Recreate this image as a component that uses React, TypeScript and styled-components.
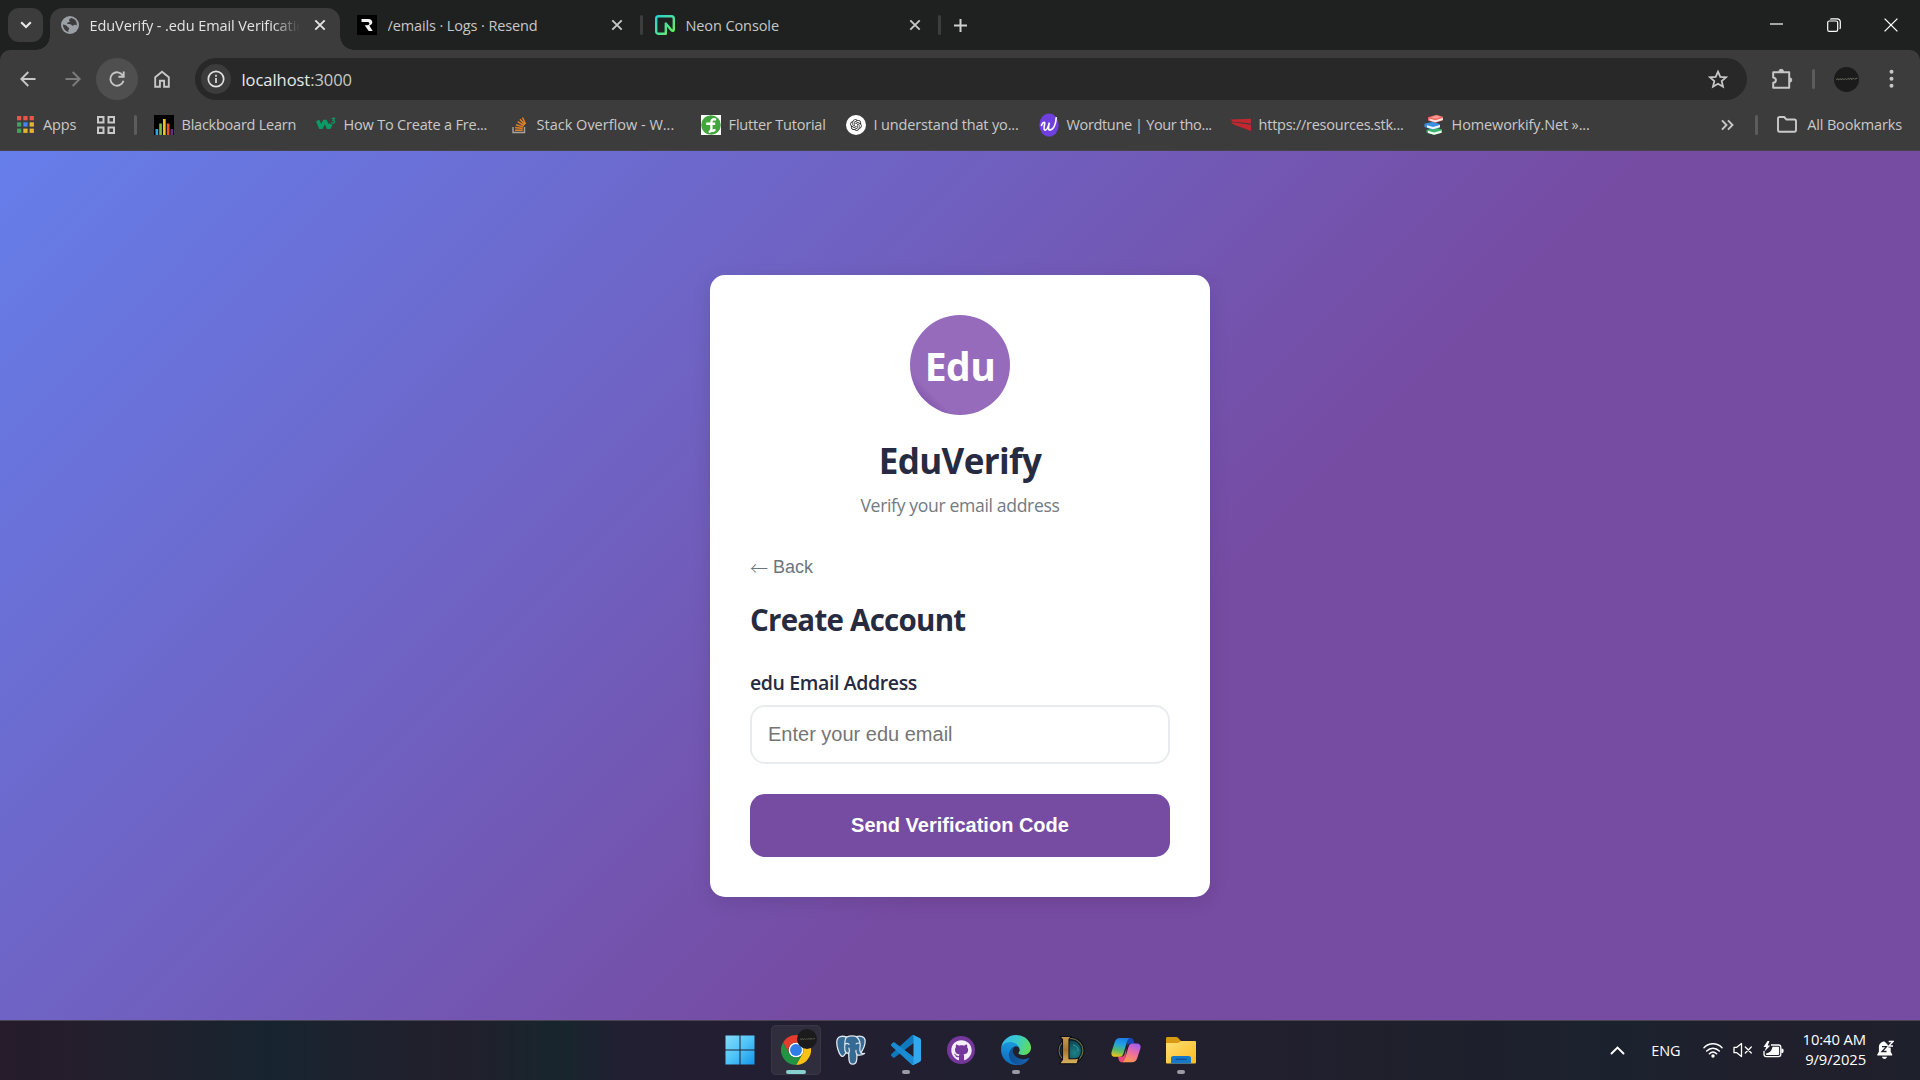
import React from 'react';
import styled, { createGlobalStyle, css } from 'styled-components';
import { FaGithub } from 'react-icons/fa';
import { RiOpenaiFill } from 'react-icons/ri';

const ui = `"Segoe UI", "Open Sans", "Noto Sans", sans-serif`;
const arial = `Arial, "Liberation Sans", sans-serif`;

const GlobalStyle = createGlobalStyle`
  *, *::before, *::after { box-sizing: border-box; }
  html, body { margin: 0; padding: 0; background: #1f2120; overflow: hidden; }
  button, input { margin: 0; }
  svg { display: block; flex: none; }
`;

const Screen = styled.div`
  display: flex;
  flex-direction: column;
  width: 1920px;
  height: 1080px;
  overflow: hidden;
  font-family: ${ui};
  color: #c9c9c9;
`;

/* ---------- tab strip ---------- */

const TabStrip = styled.header`
  display: flex;
  align-items: center;
  height: 50px;
  padding: 0 1px 0 8px;
  background: #1f2120;
`;

const TabSearch = styled.button`
  display: grid;
  place-items: center;
  width: 35px;
  height: 34px;
  margin-right: 7px;
  border: 0;
  padding: 0;
  border-radius: 11px;
  background: #3c3c3c;
  color: #e6e6e6;
`;

const Tab = styled.div<{ $active?: boolean; $width: number; $inset?: number }>`
  position: relative;
  display: flex;
  align-items: center;
  width: ${(p) => p.$width}px;
  height: 42px;
  align-self: flex-end;
  padding: 0 13px 8px 11px;
  color: ${(p) => (p.$active ? '#e3e3e3' : '#c7c7c7')};
  ${(p) =>
    p.$active
      ? css`
          background: #3c3c3c;
          border-radius: 13px 13px 0 0;
          &::before,
          &::after {
            content: '';
            position: absolute;
            bottom: 0;
            width: 14px;
            height: 14px;
          }
          &::before {
            left: -14px;
            background: radial-gradient(circle at 0 0, transparent 13.5px, #3c3c3c 14px);
          }
          &::after {
            right: -14px;
            background: radial-gradient(circle at 100% 0, transparent 13.5px, #3c3c3c 14px);
          }
        `
      : css`
          padding-left: ${p.$inset ?? 12}px;
          padding-right: 16px;
        `}
`;

const TabTitle = styled.span<{ $track: number; $fade?: boolean }>`
  flex: 1;
  margin-left: 10.5px;
  padding-top: 1px;
  overflow: hidden;
  white-space: nowrap;
  font-size: 14.5px;
  line-height: 24px;
  letter-spacing: ${(p) => p.$track}px;
  ${(p) =>
    p.$fade &&
    css`
      mask-image: linear-gradient(90deg, #000 183px, transparent 210px);
    `}
`;

const TabClose = styled.button`
  display: grid;
  place-items: center;
  width: 14px;
  height: 20px;
  border: 0;
  padding: 0;
  background: none;
  color: inherit;
`;

const Divider = styled.i<{ $color?: string }>`
  flex: none;
  width: 3px;
  height: 20px;
  border-radius: 2px;
  background: ${(p) => p.$color ?? '#5c5c5c'};
`;

const NewTab = styled.button`
  display: grid;
  place-items: center;
  width: 39px;
  height: 34px;
  border: 0;
  padding: 0;
  background: none;
  color: #d0d0d0;
`;

const WindowControls = styled.div`
  display: flex;
  margin-left: auto;
`;

const WindowButton = styled.button`
  display: grid;
  place-items: center;
  width: 57px;
  height: 50px;
  border: 0;
  padding: 0 0 1px;
  background: none;
  color: #fff;
`;

/* ---------- toolbar ---------- */

const ToolbarShell = styled.div`
  background: #1f2120;
`;

const Toolbar = styled.nav`
  display: flex;
  align-items: center;
  height: 58px;
  padding-left: 7px;
  background: #3c3c3c;
  border-radius: 10px 10px 0 0;
`;

const NavButton = styled.button<{ $hover?: boolean; $dim?: boolean; $gap?: number }>`
  display: grid;
  place-items: center;
  flex: none;
  width: 42px;
  height: 42px;
  margin-right: ${(p) => p.$gap ?? 2.5}px;
  border: 0;
  padding: 0;
  border-radius: 50%;
  background: ${(p) => (p.$hover ? '#4f4f4f' : 'none')};
  color: ${(p) => (p.$dim ? '#7c7c7c' : '#c7c7c7')};
`;

const Omnibox = styled.div`
  display: flex;
  align-items: center;
  flex: none;
  width: 1552px;
  height: 42px;
  padding: 0 19.5px 0 6px;
  border-radius: 21px;
  background: #282828;
  color: #c7c7c7;
`;

const SiteInfo = styled.span`
  display: grid;
  place-items: center;
  width: 30px;
  height: 30px;
  margin-right: 10.5px;
  border-radius: 50%;
  background: #3c3c3c;
  color: #e0e0e0;
`;

const Url = styled.span`
  flex: 1;
  padding-top: 1px;
  font-size: 16.5px;
  line-height: 26px;
  color: #c9c9c9;
  letter-spacing: -0.05px;
  b {
    font-weight: 400;
    color: #e8e8e8;
  }
`;

const ToolbarActions = styled.div`
  display: grid;
  grid-template-columns: 22px 3px 25px 5px;
  column-gap: 19px;
  align-items: center;
  padding-left: 24px;
  color: #c7c7c7;
`;

const Avatar = styled.span<{ $size: number }>`
  display: grid;
  place-items: center;
  width: ${(p) => p.$size}px;
  height: ${(p) => p.$size}px;
  border-radius: 50%;
  background: #1b1b1b;
`;

const MenuButton = styled.span`
  display: block;
  margin-left: 11px;
`;

/* ---------- bookmarks ---------- */

const BookmarkBar = styled.nav`
  display: flex;
  align-items: center;
  height: 43px;
  padding: 0 18px 9px 17px;
  background: #3c3c3c;
  border-bottom: 1px solid #45434c;
`;

const Bookmark = styled.a<{ $width?: number; $gap?: number; $track?: number }>`
  display: flex;
  align-items: center;
  flex: none;
  width: ${(p) => (p.$width ? `${p.$width}px` : 'auto')};
  gap: ${(p) => p.$gap ?? 7.6}px;
  font-size: 14.5px;
  line-height: 24px;
  white-space: nowrap;
  letter-spacing: ${(p) => p.$track ?? 0}px;
  color: #c9c9c9;
`;

const BookmarkEnd = styled.div`
  display: flex;
  align-items: center;
  margin-left: auto;
`;

/* ---------- page ---------- */

const Page = styled.main`
  display: flex;
  justify-content: center;
  align-items: center;
  height: 869px;
  background: linear-gradient(135deg, #667eea 0%, #764ba2 60%);
`;

const Card = styled.section`
  display: flex;
  flex-direction: column;
  width: 500px;
  padding: 40px;
  border-radius: 15px;
  background: #fff;
  box-shadow: 0 5px 19px rgba(0, 0, 0, 0.1);
  color: #272b41;
`;

const Logo = styled.div`
  display: grid;
  place-items: center;
  align-self: center;
  width: 100px;
  height: 100px;
  padding-top: 2px;
  border-radius: 50%;
  background: linear-gradient(45deg, #8458ad 14%, #966bbb 22%);
  color: #fff;
  font-size: 39px;
  font-weight: 700;
  letter-spacing: -0.5px;
`;

const Brand = styled.h1`
  margin: 24px 0 0;
  text-align: center;
  font-size: 35px;
  font-weight: 700;
  line-height: 44px;
  letter-spacing: -0.65px;
`;

const Tagline = styled.p`
  margin: 9px 0 0;
  text-align: center;
  font-size: 17.6px;
  line-height: 26px;
  letter-spacing: -0.35px;
  color: #727a82;
`;

const Back = styled.button`
  display: flex;
  align-items: center;
  gap: 5px;
  align-self: flex-start;
  height: 22px;
  margin-top: 38px;
  padding: 0;
  border: 0;
  background: none;
  font-family: ${arial};
  font-size: 18px;
  line-height: 22px;
  color: #6c757d;
`;

const BackArrow = styled.span`
  font-family: "Noto Sans CJK JP", sans-serif;
  font-weight: 300;
`;

const Heading = styled.h2`
  margin: 22px 0 30px;
  font-size: 29.5px;
  font-weight: 700;
  line-height: 40px;
  letter-spacing: -0.75px;
`;

const Label = styled.label`
  font-size: 19.5px;
  font-weight: 600;
  line-height: 26px;
  letter-spacing: -0.38px;
`;

const EmailInput = styled.input`
  width: 100%;
  height: 59px;
  margin: 9px 0 30px;
  padding: 0 16px;
  border: 2px solid #e9ecef;
  border-radius: 15px;
  background: #fff;
  font-family: ${arial};
  font-size: 20px;
  &::placeholder {
    color: #757575;
    opacity: 1;
  }
`;

const Submit = styled.button`
  width: 100%;
  height: 63px;
  border: 0;
  border-radius: 15px;
  background: #764ba2;
  color: #fff;
  font-family: ${arial};
  font-size: 20px;
  font-weight: 700;
`;

/* ---------- taskbar ---------- */

const Taskbar = styled.footer`
  display: grid;
  grid-template-columns: 1fr auto 1fr;
  height: 60px;
  border-top: 1px solid #494555;
  background: linear-gradient(
    90deg,
    #261c2b 0,
    #251d2c 60px,
    #20212d 150px,
    #17242f 270px,
    #1d222e 360px,
    #211f2c 450px,
    #1d222d 505px,
    #17262c 560px,
    #221f33 625px,
    #231e32 700px,
    #21202f 1000px,
    #221f2e 1250px,
    #1e202c 1450px,
    #1b222e 1620px,
    #211f2c 1780px,
    #1e202c 1920px
  );
`;

const Apps = styled.div`
  grid-column: 2;
  display: flex;
  gap: 5px;
  padding: 4px 0 0 2px;
`;

const AppTile = styled.div<{ $focused?: boolean }>`
  display: flex;
  flex-direction: column;
  align-items: center;
  width: 50px;
  height: 50px;
  padding-top: 10px;
  border-radius: 5px;
  &:first-child {
    padding-right: 3px;
  }
  ${(p) =>
    p.$focused &&
    css`
      background: #302d3d;
      box-shadow: inset 0 0 0 1px #393645;
    `}
`;

const AppIcon = styled.div`
  position: relative;
  display: grid;
  place-items: center;
  width: 30px;
  height: 30px;
`;

const ProfileBadge = styled.div`
  position: absolute;
  left: 16px;
  top: -6px;
`;

const Running = styled.i<{ $wide?: boolean }>`
  width: ${(p) => (p.$wide ? 20 : 8)}px;
  height: 4px;
  margin-top: 5px;
  border-radius: 2px;
  background: ${(p) => (p.$wide ? '#86d0cd' : '#9b99a3')};
`;

const Github = styled.span`
  display: grid;
  place-items: center;
  width: 28px;
  height: 28px;
  border-radius: 50%;
  background: #75379b;
  color: #f5eef9;
`;

const Tray = styled.div`
  grid-column: 3;
  display: flex;
  align-items: center;
  justify-content: flex-end;
  padding: 0 26px 1px 0;
  color: #fff;
`;

const Language = styled.span`
  margin: 0 22px 0 26px;
  font-size: 14.5px;
  letter-spacing: -0.1px;
`;

const Quick = styled.div`
  display: flex;
  align-items: center;
  gap: 10px;
`;

const Clock = styled.div`
  margin: 0 11px 0 19px;
  padding-bottom: 3px;
  text-align: right;
  font-size: 14.8px;
  line-height: 20px;
  letter-spacing: -0.1px;
`;

/* ---------- glyphs ---------- */

const Cross = () => (
  <svg width="12" height="12" viewBox="0 0 12 12" stroke="currentColor" strokeWidth="1.9">
    <path d="M1.3 1.3l9.4 9.4M10.7 1.3l-9.4 9.4" />
  </svg>
);

const Globe = () => (
  <svg width="18" height="18" viewBox="0 0 18 18">
    <circle cx="9" cy="9" r="9" fill="#9aa0a6" />
    <path
      d="M9.8 2.1c-.3 1-1.6.8-1.8 1.7-.1.9 1 .9.7 1.8-.4 1-2 .6-2.5 1.4-.3.7.2 1 1.3 1.1 1.3.2 2.3 0 3.1 1 .6.8 1.7.6 2.3.1.7-.6 2.5-.3 3 .2C16 4.9 13.3 2.4 9.8 2.1zM2 8.6c1.9.1 3.7 1 4.4 2.1.5.9 1.7.8 1.8 1.8.1.9-.9 1.2-.9 2.1 0 .6.3 1 .2 1.3C4.3 15.3 1.9 12.3 2 8.6z"
      fill="#3c3c3c"
    />
  </svg>
);

const ResendIcon = () => (
  <svg width="20" height="20" viewBox="0 0 20 20">
    <path fill="#000" d="M0 0h20v20H0z" />
    <path
      fill="#f2f2f2"
      d="M4.5 4h7c2.3 0 3.8 1.4 3.8 3.3 0 1.7-1.2 2.7-3 3.2l3.4 5.5h-4L7.7 10.3h2.5c1.3 0 2.2-.7 2.2-1.7 0-1-.8-1.6-2.1-1.6H4.5z"
    />
  </svg>
);

const NeonIcon = () => (
  <svg width="20" height="20" viewBox="0 0 20 20" fill="none">
    <defs>
      <linearGradient id="neon" x1="0" y1="0" x2="1" y2="1">
        <stop offset="0" stopColor="#28d3d0" />
        <stop offset="0.55" stopColor="#4fe09a" />
        <stop offset="1" stopColor="#6cf24e" />
      </linearGradient>
    </defs>
    <path
      stroke="url(#neon)"
      strokeWidth="2.4"
      strokeLinejoin="round"
      d="M10.8 18.8H3.6A2.4 2.4 0 0 1 1.2 16.4V3.6A2.4 2.4 0 0 1 3.6 1.2h12.8a2.4 2.4 0 0 1 2.4 2.4v10.8c0 1.6-1.4 1.9-2.3.8L10.8 8.4z"
    />
  </svg>
);

const Minimize = () => (
  <svg width="13" height="13" viewBox="0 0 13 13">
    <path d="M0 6h13" stroke="currentColor" strokeWidth="1.2" />
  </svg>
);

const Restore = () => (
  <svg width="14" height="14" viewBox="0 0 14 14" fill="none" stroke="currentColor" strokeWidth="1.2">
    <rect x=".7" y="3" width="10" height="10.3" rx="1.6" />
    <path d="M3.2 1.3C3.6.9 4 .8 4.6.8H10c2 0 3.3 1.2 3.3 3.2v5.4c0 .6-.2 1.1-.6 1.5" />
  </svg>
);

const CloseWindow = () => (
  <svg width="14" height="14" viewBox="0 0 14 14" stroke="currentColor" strokeWidth="1.3">
    <path d="M.6.6l12.8 12.8M13.4.6L.6 13.4" />
  </svg>
);

const Arrow = ({ flip }: { flip?: boolean }) => (
  <svg width="16" height="16" viewBox="0 0 16 16" fill="none" stroke="currentColor" strokeWidth="1.9">
    <path d={flip ? 'M.5 8h14M7.7 1l7 7-7 7' : 'M15.5 8h-14M8.3 1l-7 7 7 7'} />
  </svg>
);

const Reload = () => (
  <svg width="18" height="18" viewBox="0 0 18 18" fill="none" stroke="currentColor" strokeWidth="1.9">
    <path d="M14.9 5.7A6.7 6.7 0 1 0 15.5 10.8" />
    <path d="M15.7 1.5v5.3h-5.3" />
  </svg>
);

const Home = () => (
  <svg width="18" height="18" viewBox="0 0 18 18" fill="none" stroke="currentColor" strokeWidth="1.9">
    <path d="M2.2 7.2L9 1.8l6.8 5.4v9.6h-4.7v-6H6.9v6H2.2z" />
  </svg>
);

const Info = () => (
  <svg width="18" height="18" viewBox="0 0 18 18" fill="none" stroke="currentColor" strokeWidth="1.7">
    <circle cx="9" cy="9" r="7.7" />
    <path d="M9 8v5M9 4.8v1.9" />
  </svg>
);

const Star = () => (
  <svg width="20" height="20" viewBox="0 0 20 20" fill="none" stroke="currentColor" strokeWidth="1.8">
    <path d="M10 2.6l2.3 5.2 5.7.5-4.3 3.8 1.3 5.6-5-3-5 3 1.3-5.6L2 8.3l5.7-.5z" />
  </svg>
);

const Puzzle = () => (
  <svg width="22" height="22" viewBox="0 0 22 22" fill="none" stroke="currentColor" strokeWidth="2">
    <path d="M2.200 4.200h16v15.500h-16v-4.900c1.900-.3 2.700-1.300 2.700-2.600S4.100 9.900 2.200 9.600z" strokeLinejoin="round" />
    <path d="M7.900 3.600a2.300 2.300 0 0 1 4.600 0zM18.600 9.800a2.200 2.200 0 0 1 0 4.400z" fill="currentColor" strokeWidth="1" />
  </svg>
);

const Dots = () => (
  <svg width="5" height="20" viewBox="0 0 5 20" fill="currentColor">
    <circle cx="2.5" cy="2.700" r="2" />
    <circle cx="2.5" cy="9.700" r="2" />
    <circle cx="2.5" cy="16.700" r="2" />
  </svg>
);

const Signature = ({ width }: { width: number }) => (
  <svg width={width} height="4" viewBox="0 0 24 4" fill="none" stroke="#77776a" strokeWidth=".8">
    <path d="M1 2.6l2-1 .5 1.3 2-1.3.5 1.2 2-1.2 1 1.2 1.5-1.3 1 1 2-1.2.5 1.2 2-1.5.5 1.6 2-1.4 1 1 3-1.2" />
  </svg>
);

const AppsGrid = () => {
  const colors = ['#ea5548', '#ea5548', '#ea5548', '#3fa45b', '#4285f4', '#e5b32e', '#3fa45b', '#e5b32e', '#e5b32e'];
  return (
    <svg width="17" height="17" viewBox="0 0 17 17">
      {colors.map((c, i) => (
        <rect key={i} x={(i % 3) * 6.3} y={Math.floor(i / 3) * 6.3} width="4.3" height="4.3" fill={c} />
      ))}
    </svg>
  );
};

const TabGroups = () => (
  <svg width="18" height="18" viewBox="0 0 18 18" fill="none" stroke="currentColor" strokeWidth="2">
    <path d="M1 1h5.500v5.500H1zM11.500 1H17v5.500h-5.500zM1 11.500h5.500V17H1zM11.500 11.500H17V17h-5.500z" />
  </svg>
);

const BlackboardIcon = () => (
  <svg width="20" height="20" viewBox="0 0 20 20">
    <path fill="#000" d="M0 0h20v20H0z" />
    <path fill="#2aa7dc" d="M1.500 14h2.700v6H1.500z" />
    <path fill="#73b843" d="M5.200 8.500h2.700V20H5.200z" />
    <path fill="#f0c020" d="M9 4h2.700v16H9z" />
    <path fill="#e4572e" d="M12.800 8.500h2.700V20h-2.700z" />
    <path fill="#6b2c86" d="M16.500 14h2.700v6h-2.700z" />
  </svg>
);

const W3Icon = () => (
  <svg width="20" height="20" viewBox="0 0 20 20" fill="none" stroke="#0b9b66">
    <path d="M1.700 5.500l3.200 7.700 4-7.700 3.800 7.700 2.300-4" strokeWidth="3.600" strokeLinejoin="bevel" />
    <path d="M15.800 3.300h2.700l-1.500 2c2.300 0 2.100 3-.2 2.800-.6 0-1-.3-1.300-.7" strokeWidth="1.200" />
  </svg>
);

const StackIcon = () => (
  <svg width="20" height="20" viewBox="0 0 20 20" fill="none">
    <path d="M4 12v5.500h11.500V12" stroke="#a8a39e" strokeWidth="1.400" />
    <path
      d="M6 15.200h7.700M6.100 12.600l7.600.9M7 9.700l7.200 2.200M8.700 6.700l6.300 3.900M11 4.200l4.800 5.500M13.500 2.500l3 6.500"
      stroke="#e08228"
      strokeWidth="1.500"
    />
  </svg>
);

const FlutterTutorialIcon = () => (
  <svg width="20" height="20" viewBox="0 0 20 20" fill="none">
    <path fill="#fff" d="M0 0h20v20H0z" />
    <circle cx="10" cy="10" r="9.800" fill="#43a53d" />
    <path d="M15 4.800c-2.600-1.300-4.600-.3-4.600 2.500v6.500c0 1.700-.8 3-2.700 3.200M5.200 8.700h9M10.500 15c.8 1.300 2.600 1 3.500-.7" stroke="#fff" strokeWidth="2.400" />
  </svg>
);

const ChatIcon = () => (
  <svg width="20" height="20" viewBox="0 0 20 20">
    <circle cx="10" cy="10" r="10" fill="#fff" />
    <g color="#222">
      <RiOpenaiFill x="3" y="3" size={14} />
    </g>
  </svg>
);

const WordtuneIcon = () => (
  <svg width="20" height="24" viewBox="0 0 20 24" fill="none">
    <ellipse cx="10" cy="12" rx="9.700" ry="11.500" fill="#6f3fe0" />
    <path
      d="M2.500 12.500c.7-2.500 2.800-4.200 3.200-2.700.4 1.600-2 6.700.2 7.300 2.300.5 4-5 4.400-7.400-.8 3.400-1.500 7.300.7 7.300 3.700 0 6-6.500 6.200-12.200"
      stroke="#fff"
      strokeWidth="1.600"
      strokeLinecap="round"
    />
  </svg>
);

const StakeIcon = () => (
  <svg width="20" height="14" viewBox="0 0 20 14">
    <path fill="#c3272f" d="M0 1.500L20 .8v4.700L1 3.500zM0 4l20 2.800v6.200L2.500 6.500z" />
  </svg>
);

const BooksIcon = () => (
  <svg width="20" height="22" viewBox="0 0 20 22">
    <path fill="#39b567" d="M2.500 16l9-2.500 6.500 2v3.200L10 21l-7.500-2.500z" />
    <path fill="#f3f8f4" d="M4 16.800l6 1.700 7.500-2v2.200l-7.500 2-6-1.600z" />
    <path fill="#3a8fe0" d="M.5 9.700l8.500-2 7 2.500v3.100l-7.500 2.400-8-2.700z" />
    <path fill="#eef5fc" d="M3 11.200l6 1.700 7-2v2.300L9 15.200l-6-1.800z" />
    <path fill="#ef6a62" d="M4 3.200L12.500.8l6.500 2v3.400l-7.500 2.500L4 6.500z" />
    <path fill="#fbe9e6" d="M5.500 4.700l6 1.600 7.300-2.200v1.900l-7.300 2.200-6-1.700z" />
    <path fill="#f59a94" d="M6.500 3.200l6-1.600 4.500 1.400-5.500 1.700z" />
  </svg>
);

const Chevrons = () => (
  <svg width="13" height="12" viewBox="0 0 13 12" fill="none" stroke="currentColor" strokeWidth="1.900">
    <path d="M1 1.300L5.500 6 1 10.700M7 1.300L11.500 6 7 10.700" />
  </svg>
);

const Folder = () => (
  <svg width="20" height="17" viewBox="0 0 20 17" fill="none" stroke="currentColor" strokeWidth="1.900">
    <path d="M1 2.600C1 1.500 1.500 1 2.600 1h4.600l2.200 2.500h8c1.100 0 1.600.5 1.600 1.600v9c0 1.100-.5 1.600-1.600 1.600H2.600C1.500 15.700 1 15.200 1 14.100z" />
  </svg>
);

const WindowsIcon = () => (
  <svg width="30" height="30" viewBox="0 0 30 30">
    <defs>
      <linearGradient id="win" gradientUnits="userSpaceOnUse" x1="0" y1="0" x2="30" y2="30">
        <stop offset="0" stopColor="#86dcfb" />
        <stop offset="0.5" stopColor="#4fc4f7" />
        <stop offset="1" stopColor="#1292ea" />
      </linearGradient>
    </defs>
    <path fill="url(#win)" d="M.5.5h14v14H.5zM15.500.5h14v14h-14zM.5 15.500h14v14H.5zM15.500 15.500h14v14h-14z" />
  </svg>
);

const ChromeIcon = () => (
  <svg width="30" height="30" viewBox="0 0 48 48">
    <circle cx="24" cy="24" r="12" fill="#fff" />
    <path fill="#e33b2e" d="M24,12H44.7812a23.9939,23.9939,0,0,0-41.5639.0029L13.6079,30l.0093-.0024A11.9852,11.9852,0,0,1,24,12Z" />
    <path fill="#fbc116" d="M34.3913,30.0029,24.0007,48A23.994,23.994,0,0,0,44.78,12.0031H23.9989l-.0025.0093A11.985,11.985,0,0,1,34.3913,30.0029Z" />
    <path fill="#229342" d="M13.6086,30.0031,3.218,12.006A23.994,23.994,0,0,0,24.0025,48L34.3931,30.0029l-.0067-.0068a11.9852,11.9852,0,0,1-20.7778.007Z" />
    <circle cx="24" cy="24" r="9.500" fill="#2f7de9" />
  </svg>
);

const PostgresIcon = () => (
  <svg width="30" height="30" viewBox="0 0 30 30" strokeLinejoin="round" strokeLinecap="round">
    <path
      d="M10.500 2.200C6.500.4 1.200 1 .8 6.500c-.3 4.300 1.700 11.600 4.300 14.200 1.200 1.200 2.300.6 3-.4l2-2.600c.8.500 1.700.6 2.600.5.200 3-.2 6.600 1 9.200.9 2 4.200 2.400 5.800.6 1.600-1.900 1.300-5.300 1.500-8.200 2.600.7 5.500.3 7.500-1.300-1.400.1-2.900.1-3.700-.7 2.500-3.600 4.500-9.300 4.300-12.300C28.800 1.500 24.300.4 20.500 1.700 17.500.5 13.500.7 10.500 2.200z"
      fill="#356a94"
      stroke="#dfe8ef"
      strokeWidth="1.300"
    />
    <path
      d="M10.500 2.200C8.200 5 9 9.500 8.700 12.500c-.2 2 .2 3.700 1.400 5.200M20.500 1.700c2.500 2.200 3.700 5.500 3.700 8.300 0 2.800-1.200 4.500.2 7.300M12.700 18.200c.8-1.700 1.100-3 .2-5.200M9 9.200c1.300-1 3-.9 4 .1M20.200 8.800c1-.8 2.500-1 3.600-.3M21 19.800c-.6-1.500-1.500-2.500-1-4.500"
      fill="none"
      stroke="#dfe8ef"
      strokeWidth="1.200"
    />
  </svg>
);

const VsCodeIcon = () => (
  <svg width="30" height="30" viewBox="0 0 100 100">
    <path
      fill="#0f79bd"
      d="M96.4614 10.7962L75.8569 0.875542C73.4719 -0.272773 70.6217 0.211611 68.75 2.08333L1.29858 63.5832C-0.515693 65.2373 -0.513607 68.0937 1.30308 69.7452L6.81272 74.754C8.29793 76.1042 10.5347 76.2036 12.1338 74.9905L93.3609 13.3699C96.086 11.3026 100 13.2462 100 16.6667V16.4275C100 14.0265 98.6246 11.8378 96.4614 10.7962Z"
    />
    <path
      fill="#1a8ad3"
      d="M96.4614 89.2038L75.8569 99.1245C73.4719 100.273 70.6217 99.7884 68.75 97.9167L1.29858 36.4169C-0.515693 34.7627 -0.513607 31.9063 1.30308 30.2548L6.81272 25.246C8.29793 23.8958 10.5347 23.7964 12.1338 25.0095L93.3609 86.6301C96.086 88.6974 100 86.7538 100 83.3333V83.5725C100 85.9735 98.6246 88.1622 96.4614 89.2038Z"
    />
    <path
      fill="#32a9ee"
      d="M75.8578 99.1263C73.4721 100.274 70.6219 99.7885 68.75 97.9166C71.0564 100.223 75 98.5895 75 95.3278V4.67213C75 1.41039 71.0564 -0.223106 68.75 2.08329C70.6219 0.211402 73.4721 -0.273666 75.8578 0.873633L96.4587 10.7807C98.6234 11.8217 100 14.0112 100 16.4132V83.5871C100 85.9891 98.6234 88.1786 96.4586 89.2196L75.8578 99.1263Z"
    />
  </svg>
);

const EdgeIcon = () => (
  <svg width="30" height="30" viewBox="0 0 256 256">
    <defs>
      <linearGradient id="edgeDeep" x1="0" y1="0" x2="1" y2="0">
        <stop offset="0" stopColor="#0c4f94" />
        <stop offset="1" stopColor="#1a64ae" />
      </linearGradient>
      <linearGradient id="edgeBlue" x1="0.6" y1="0" x2="0.4" y2="1">
        <stop offset="0" stopColor="#1b9de2" />
        <stop offset="0.5" stopColor="#1683cf" />
        <stop offset="1" stopColor="#0f6bbd" />
      </linearGradient>
      <linearGradient id="edgeWave" x1="0" y1="0.3" x2="1" y2="0.6">
        <stop offset="0" stopColor="#35b8ee" />
        <stop offset="0.5" stopColor="#3bcbc9" />
        <stop offset="1" stopColor="#62dd55" />
      </linearGradient>
    </defs>
    <path
      fill="url(#edgeDeep)"
      d="M235.68 195.46a93.73 93.73 0 0 1-10.54 4.71 101.87 101.87 0 0 1-35.9 6.46c-47.32 0-88.54-32.55-88.54-74.32A31.48 31.48 0 0 1 117.13 105c-42.8 1.8-53.8 46.4-53.8 72.53 0 73.88 68.09 81.37 82.76 81.37 7.91 0 19.84-2.3 27-4.56l1.31-.44a128.34 128.34 0 0 0 66.6-52.8 4 4 0 0 0-5.32-5.64z"
    />
    <path
      fill="url(#edgeBlue)"
      d="M105.73 241.42a79.2 79.2 0 0 1-22.74-21.34 80.72 80.72 0 0 1 29.53-120c3.12-1.47 8.45-4.13 15.54-4a32.35 32.35 0 0 1 25.69 13 31.88 31.88 0 0 1 6.36 18.66c0-.21 24.46-79.6-80-79.6-43.9 0-80 41.66-80 78.21a130.15 130.15 0 0 0 12.11 56 128 128 0 0 0 156.38 67.11 75.55 75.55 0 0 1-62.78-8z"
    />
    <path
      fill="url(#edgeWave)"
      d="M152.33 148.86c-.81 1.05-3.3 2.5-3.3 5.66 0 2.61 1.7 5.12 4.72 7.23 14.38 10 41.49 8.68 41.56 8.68a59.56 59.56 0 0 0 30.27-8.35A61.38 61.38 0 0 0 256 109.21c.26-22.41-8-37.31-11.34-43.91C223.46 23.84 177.72 0 128 0A128 128 0 0 0 0 126.2c.48-36.54 36.8-66.05 80-66.05 3.5 0 23.46.34 42 10.07 16.34 8.58 24.9 18.94 30.85 29.21 6.18 10.67 7.28 24.15 7.28 29.52s-2.74 13.33-7.8 19.91z"
    />
  </svg>
);

const LeagueIcon = () => (
  <svg width="30" height="30" viewBox="0 0 30 30">
    <defs>
      <linearGradient id="lolGold" x1="0" y1="0" x2="0" y2="1">
        <stop offset="0" stopColor="#c99a4e" />
        <stop offset="0.5" stopColor="#a87630" />
        <stop offset="1" stopColor="#d8b25e" />
      </linearGradient>
      <radialGradient id="lolSea" cx="0.65" cy="0.6" r="0.6">
        <stop offset="0" stopColor="#1b8288" />
        <stop offset="1" stopColor="#0a3a49" />
      </radialGradient>
    </defs>
    <circle cx="15" cy="15.500" r="13.500" fill="#06141b" />
    <circle cx="15" cy="15.500" r="12" fill="url(#lolSea)" stroke="#8a6a36" strokeWidth="1" />
    <circle cx="15" cy="15.500" r="10.600" fill="none" stroke="#06141b" strokeWidth="1" />
    <path d="M17 10c3.500.5 5.500 3 5.200 6.500" fill="none" stroke="#2fa5a5" strokeWidth="1" />
    <path
      d="M4 1.500h11l-2 3v19.300h6.700l3.300-1-2 5.900H3.500l3-4.200V4.500z"
      fill="url(#lolGold)"
      stroke="#0c0f16"
      strokeWidth="1.100"
    />
  </svg>
);

const CopilotIcon = () => (
  <svg width="30" height="30" viewBox="0 0 30 30">
    <defs>
      <linearGradient id="copLeft" x1="0.5" y1="0" x2="0.3" y2="1">
        <stop offset="0" stopColor="#1c7fe8" />
        <stop offset="0.35" stopColor="#21a5dc" />
        <stop offset="0.65" stopColor="#55b96a" />
        <stop offset="1" stopColor="#f3c31f" />
      </linearGradient>
      <linearGradient id="copRight" x1="0.7" y1="0" x2="0.3" y2="1">
        <stop offset="0" stopColor="#a55df0" />
        <stop offset="0.5" stopColor="#ee6f9c" />
        <stop offset="1" stopColor="#fb9a4c" />
      </linearGradient>
    </defs>
    <path d="M15.500 3h4c1.800 0 2.600 1 3.100 2.700l.9 3h-4.200c-1.700 0-2.400.9-2.900 2.500z" fill="#1746b8" />
    <path d="M14 27.300h-3c-1.900 0-2.900-1.200-3.300-2.900l-.7-2.900h3.600c1.700 0 2.400-.8 2.900-2.300l2-6z" fill="#e8457a" />
    <path
      d="M9 3h9.500c-1.500.7-2 2-2.500 3.700l-3.500 11.500c-.7 2.400-1.700 3.600-4 3.600H4.200c-3.200 0-4.400-2-3.500-5.300L3.800 7C4.700 4.300 6.300 3 9 3z"
      fill="url(#copLeft)"
    />
    <path
      d="M21 27.300h-9.500c1.500-.7 2-2 2.500-3.700l3.500-11.500c.7-2.400 1.700-3.600 4-3.600h4.300c3.200 0 4.400 2 3.500 5.300l-3.100 9.500c-.9 2.700-2.500 4-5.200 4z"
      fill="url(#copRight)"
    />
  </svg>
);

const ExplorerIcon = () => (
  <svg width="30" height="30" viewBox="0 0 30 30">
    <defs>
      <linearGradient id="folderFace" x1="0" y1="0" x2="1" y2="1">
        <stop offset="0" stopColor="#ffdf73" />
        <stop offset="1" stopColor="#fcbb1f" />
      </linearGradient>
    </defs>
    <path d="M0 3.500C0 2.500.6 2 1.500 2h8.700c.8 0 1.300.3 1.800.8L14.500 5.500V12H0z" fill="#d99a13" />
    <path d="M0 8h11.500c1 0 1.500-.3 2.100-.9L14.700 6h14c.9 0 1.300.5 1.300 1.300v20c0 .9-.5 1.200-1.300 1.200H1.300C.5 28.500 0 28.200 0 27.300z" fill="url(#folderFace)" />
    <path d="M5 28.500v-5C5 21.700 5.900 21 7.500 21h15c1.600 0 2.500.7 2.500 2.500v5z" fill="#1777c9" />
    <path d="M9.500 24.300h11" stroke="#0b4f91" strokeWidth="1.200" />
  </svg>
);

const ChevronUp = () => (
  <svg width="15" height="9" viewBox="0 0 15 9" fill="none" stroke="currentColor" strokeWidth="1.900" strokeLinecap="round">
    <path d="M1.500 7.500l6-6 6 6" />
  </svg>
);

const Wifi = () => (
  <svg width="20" height="16" viewBox="0 0 20 16" fill="none" stroke="currentColor" strokeWidth="1.500" strokeLinecap="round">
    <path d="M1 5.800c5-5.300 13-5.300 18 0M3.700 8.900c3.600-3.700 9-3.700 12.600 0M6.400 11.800c2.200-2.200 5-2.200 7.200 0" />
    <circle cx="10" cy="14" r="1.700" fill="currentColor" stroke="none" />
  </svg>
);

const Muted = () => (
  <svg width="20" height="16" viewBox="0 0 20 16" fill="none" stroke="currentColor" strokeWidth="1.300" strokeLinejoin="round" strokeLinecap="round">
    <path d="M1 5.300h2.800L8.500 1.500v13L3.800 10.700H1z" />
    <path d="M12.300 5l6 6M18.300 5l-6 6" />
  </svg>
);

const Battery = () => (
  <svg width="21" height="18" viewBox="0 0 21 18" fill="none">
    <path d="M8 4h7.500c1.500 0 2.300.8 2.300 2.300v7c0 1.500-.8 2.300-2.300 2.300H3.300C1.800 15.600 1 14.800 1 13.300V10" stroke="currentColor" strokeWidth="1.300" />
    <path d="M9.500 5.800h5.800c.5 0 .8.3.8.8v6.500c0 .5-.3.8-.8.8H3.700c-.5 0-.8-.3-.8-.8v-.6c3.600-.2 6-3 6.600-6.700z" fill="currentColor" />
    <path d="M18.300 7.500c2 0 2.300.8 2.300 2.200s-.3 2.300-2.300 2.300z" fill="currentColor" />
    <path d="M4.500 0L.5 6h2.700L1.500 10.500 7.300 4.500H4.700L6.500 0z" fill="currentColor" />
  </svg>
);

const Bell = () => (
  <svg width="17" height="20" viewBox="0 0 17 20">
    <path
      d="M7.500 1.500C4.200 1.500 1.900 4 1.900 7v4.700L.3 14.500c-.2.6 0 1 .6 1h13.700c.6 0 .8-.4.6-1l-1.500-2.800V7.500zM5 16.800h5c-.3 1.400-1.200 2.100-2.500 2.100S5.300 18.200 5 16.800z"
      fill="currentColor"
    />
    <path d="M9.500.5H17v7h-5.500z" fill="#211f2c" />
    <path d="M5 6.700h4.500L5 11.500h4.500" fill="none" stroke="#211f2c" strokeWidth="1.300" />
    <path d="M11.700 1.500H16L11.700 6H16" fill="none" stroke="currentColor" strokeWidth="1.300" />
  </svg>
);

/* ---------- data ---------- */

const bookmarks = [
  { icon: <BlackboardIcon />, text: 'Blackboard Learn', width: 162, track: -0.25 },
  { icon: <W3Icon />, text: 'How To Create a Fre...', width: 193, track: -0.2 },
  { icon: <StackIcon />, text: 'Stack Overflow - W...', width: 192, track: 0 },
  { icon: <FlutterTutorialIcon />, text: 'Flutter Tutorial', width: 145, track: -0.2 },
  { icon: <ChatIcon />, text: 'I understand that yo...', width: 193, track: -0.16 },
  { icon: <WordtuneIcon />, text: 'Wordtune | Your tho...', width: 192, track: -0.36 },
  { icon: <StakeIcon />, text: 'https://resources.stk...', width: 193, track: -0.25 },
  { icon: <BooksIcon />, text: 'Homeworkify.Net »...', width: 180, track: -0.13 },
];

const taskbarApps = [
  { name: 'start', icon: <WindowsIcon /> },
  { name: 'chrome', icon: <ChromeIcon />, focused: true, running: true },
  { name: 'postgres', icon: <PostgresIcon /> },
  { name: 'code', icon: <VsCodeIcon />, running: true },
  { name: 'github', icon: <Github><FaGithub size={21} /></Github> },
  { name: 'edge', icon: <EdgeIcon />, running: true },
  { name: 'league', icon: <LeagueIcon /> },
  { name: 'copilot', icon: <CopilotIcon /> },
  { name: 'explorer', icon: <ExplorerIcon />, running: true },
];

export default function App() {
  return (
    <Screen>
      <GlobalStyle />
      <TabStrip>
        <TabSearch>
          <svg width="12" height="8" viewBox="0 0 12 8" fill="none" stroke="currentColor" strokeWidth="2.2">
            <path d="M1.2 1.2L6 6l4.800-4.800" />
          </svg>
        </TabSearch>
        <Tab $active $width={290}>
          <Globe />
          <TabTitle $track={-0.08} $fade>EduVerify - .edu Email Verification</TabTitle>
          <TabClose><Cross /></TabClose>
        </Tab>
        <Tab $width={300} $inset={17}>
          <ResendIcon />
          <TabTitle $track={-0.12}>/emails · Logs · Resend</TabTitle>
          <TabClose><Cross /></TabClose>
        </Tab>
        <Divider $color="#3c3d3c" />
        <Tab $width={295}>
          <NeonIcon />
          <TabTitle $track={-0.1}>Neon Console</TabTitle>
          <TabClose><Cross /></TabClose>
        </Tab>
        <Divider $color="#3c3d3c" />
        <NewTab>
          <svg width="13" height="13" viewBox="0 0 13 13" stroke="currentColor" strokeWidth="2">
            <path d="M6.5 0v13M0 6.5h13" />
          </svg>
        </NewTab>
        <WindowControls>
          <WindowButton><Minimize /></WindowButton>
          <WindowButton><Restore /></WindowButton>
          <WindowButton><CloseWindow /></WindowButton>
        </WindowControls>
      </TabStrip>

      <ToolbarShell>
        <Toolbar>
          <NavButton><Arrow /></NavButton>
          <NavButton $dim><Arrow flip /></NavButton>
          <NavButton $hover><Reload /></NavButton>
          <NavButton $gap={12.5}><Home /></NavButton>
          <Omnibox>
            <SiteInfo><Info /></SiteInfo>
            <Url><b>localhost</b>:3000</Url>
            <Star />
          </Omnibox>
          <ToolbarActions>
            <Puzzle />
            <Divider />
            <Avatar $size={25}><Signature width={24} /></Avatar>
            <MenuButton><Dots /></MenuButton>
          </ToolbarActions>
        </Toolbar>
      </ToolbarShell>

      <BookmarkBar>
        <Bookmark $width={80} $gap={9} $track={-0.1}><AppsGrid />Apps</Bookmark>
        <Bookmark $width={37}><TabGroups /></Bookmark>
        <Divider />
        <Bookmark $width={17} />
        {bookmarks.map((b) => (
          <Bookmark key={b.text} $width={b.width} $track={b.track}>{b.icon}{b.text}</Bookmark>
        ))}
        <BookmarkEnd>
          <Bookmark $width={34}><Chevrons /></Bookmark>
          <Bookmark $width={22}><Divider /></Bookmark>
          <Bookmark $gap={10} $track={-0.14}><Folder />All Bookmarks</Bookmark>
        </BookmarkEnd>
      </BookmarkBar>

      <Page>
        <Card>
          <Logo>Edu</Logo>
          <Brand>EduVerify</Brand>
          <Tagline>Verify your email address</Tagline>
          <Back><BackArrow>←</BackArrow>Back</Back>
          <Heading>Create Account</Heading>
          <Label htmlFor="email">edu Email Address</Label>
          <EmailInput id="email" placeholder="Enter your edu email" />
          <Submit>Send Verification Code</Submit>
        </Card>
      </Page>

      <Taskbar>
        <Apps>
          {taskbarApps.map((a) => (
            <AppTile key={a.name} $focused={a.focused}>
              <AppIcon>
                {a.icon}
                {a.focused && (
                  <ProfileBadge>
                    <Avatar $size={20}><Signature width={17} /></Avatar>
                  </ProfileBadge>
                )}
              </AppIcon>
              {a.running && <Running $wide={a.focused} />}
            </AppTile>
          ))}
        </Apps>
        <Tray>
          <ChevronUp />
          <Language>ENG</Language>
          <Quick>
            <Wifi />
            <Muted />
            <Battery />
          </Quick>
          <Clock>10:40 AM<br />9/9/2025</Clock>
          <Bell />
        </Tray>
      </Taskbar>
    </Screen>
  );
}
